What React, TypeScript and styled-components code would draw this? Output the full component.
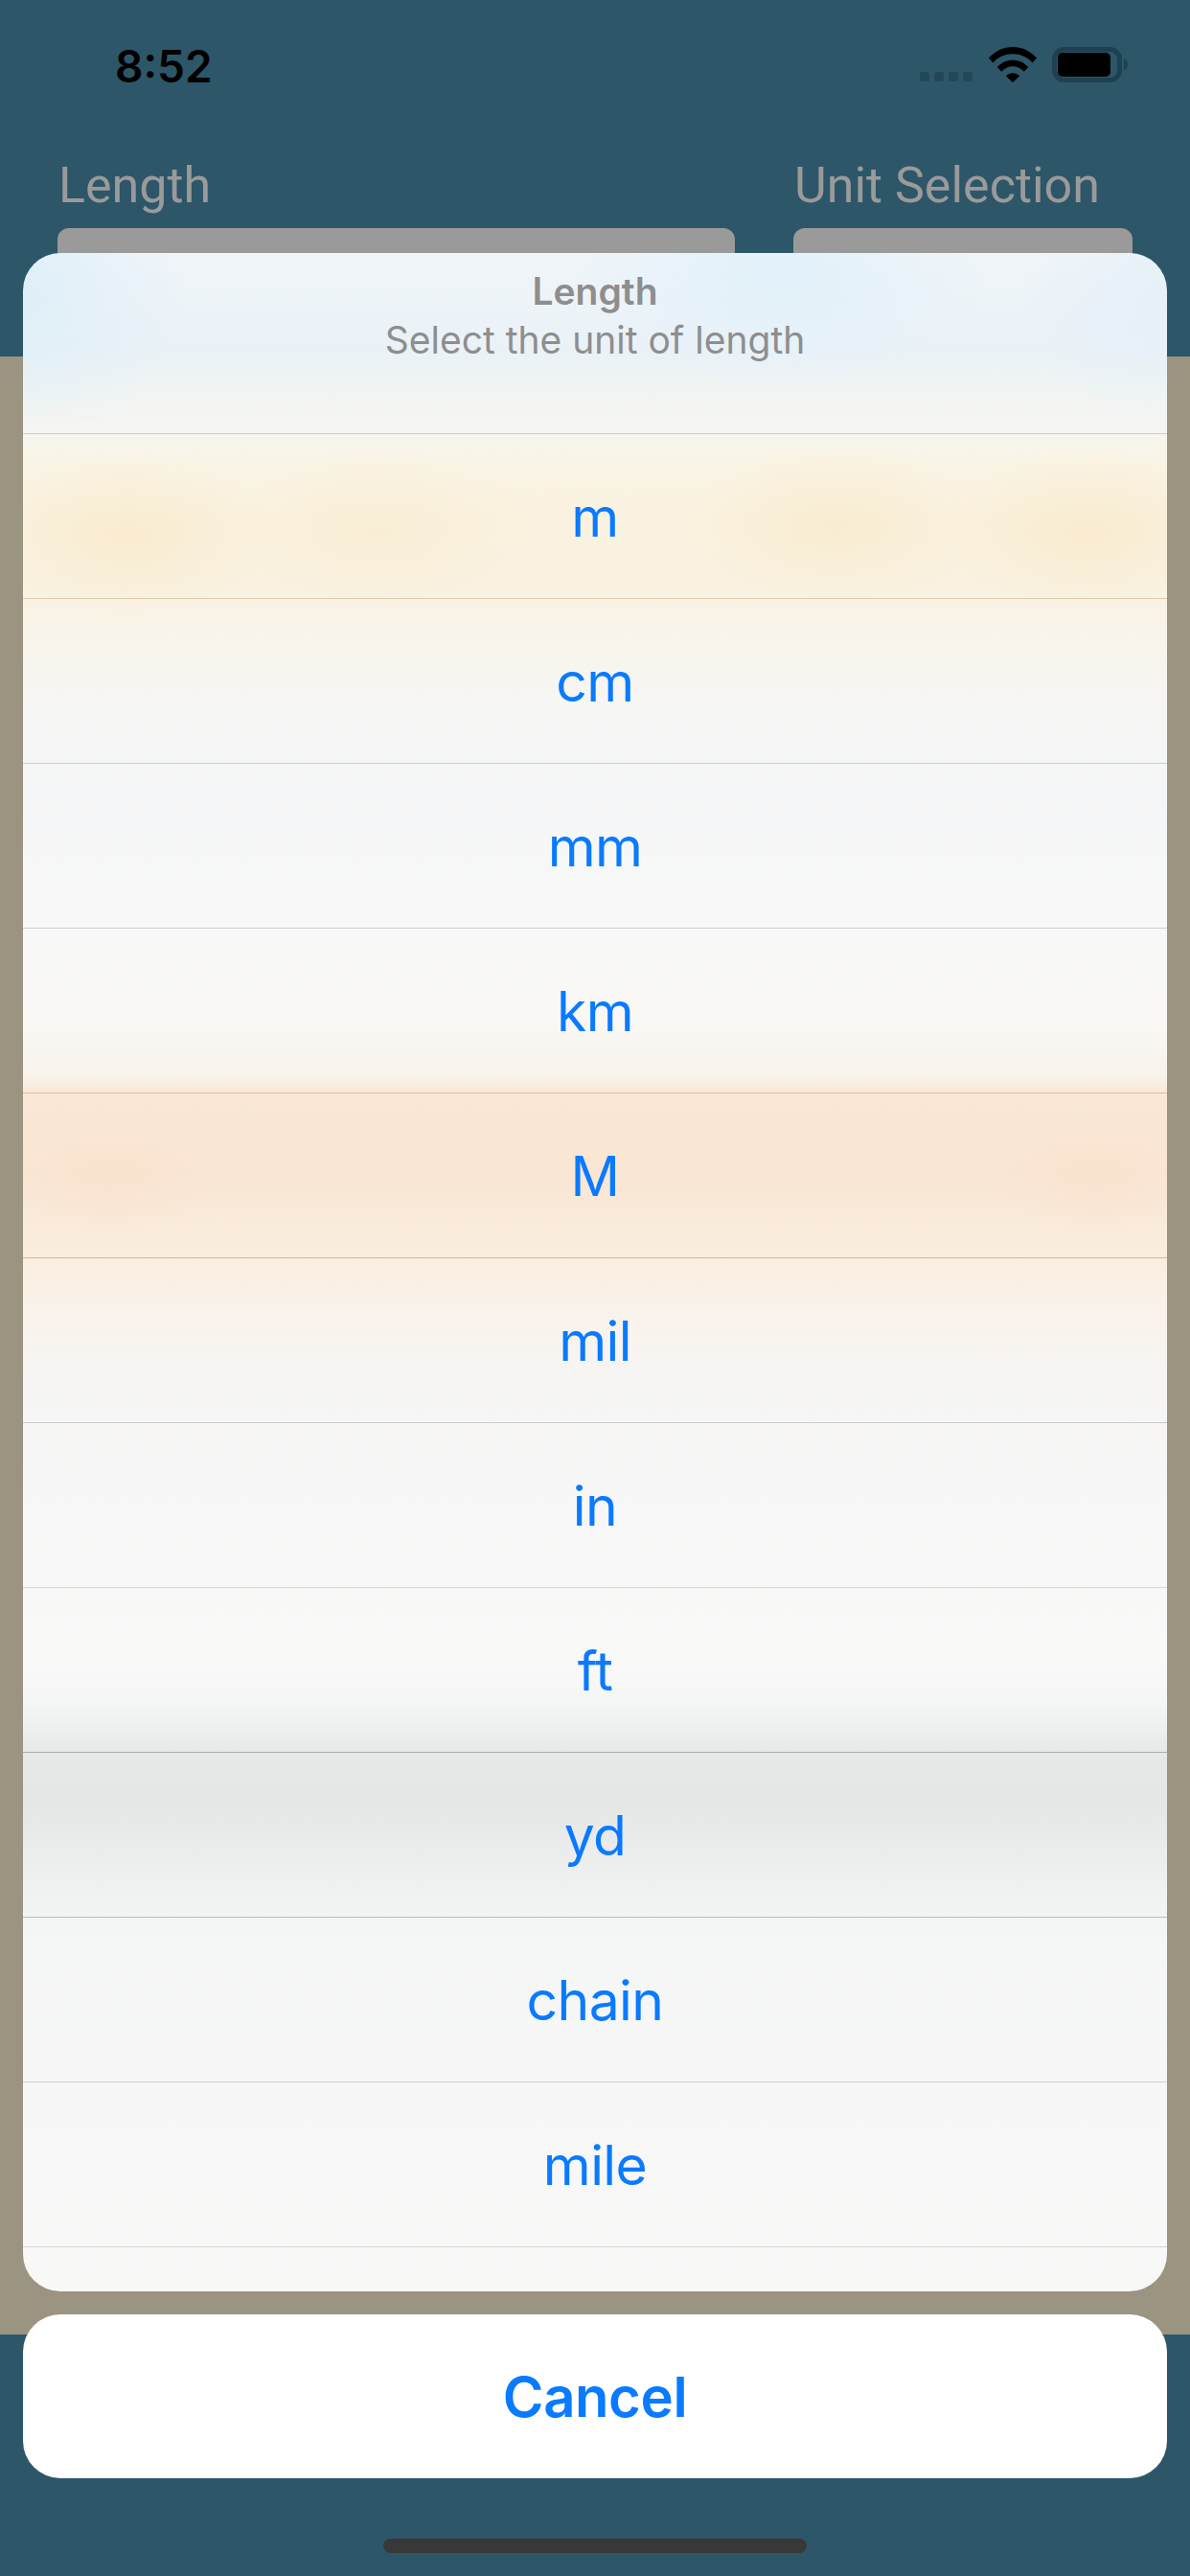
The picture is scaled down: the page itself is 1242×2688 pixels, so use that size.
import styled, { createGlobalStyle } from 'styled-components'

const GlobalStyle = createGlobalStyle`
  html, body {
    margin: 0;
    padding: 0;
  }
  body {
    font-family: Inter, "Liberation Sans", sans-serif;
    background: #2d5669;
  }
`

const Screen = styled.div`
  background: #2d5669;
  display: flex;
  flex-direction: column;
  height: 2688px;
  overflow: hidden;
  position: relative;
  width: 1242px;
`

const StatusBar = styled.div`
  align-items: flex-start;
  display: flex;
  height: 132px;
  justify-content: space-between;
  padding: 0 65px 0 120px;
`

const Time = styled.div`
  color: #000;
  font-size: 46px;
  font-weight: 600;
  line-height: 46px;
  margin-top: 46px;
`

const StatusIcons = styled.div`
  align-items: flex-start;
  display: flex;
  margin-top: 49px;

  svg + svg {
    margin-left: 16px;
  }
`

const SignalDots = styled.div`
  display: flex;
  gap: 5px;
  margin: 26px 17px 0 0;
`

const Dot = styled.span`
  background: #234757;
  border-radius: 3px;
  display: block;
  height: 10px;
  width: 10px;
`

const Fields = styled.div`
  display: flex;
  gap: 61px;
  height: 240px;
  padding: 0 60px;
`

const Field = styled.div<{ $width: number }>`
  display: flex;
  flex-direction: column;
  width: ${p => p.$width}px;
`

const FieldLabel = styled.div`
  box-sizing: border-box;
  color: #9a9a9a;
  font-family: Roboto, sans-serif;
  font-size: 52px;
  font-weight: 400;
  height: 106px;
  line-height: 60px;
  padding: 32px 0 0 1px;
  white-space: nowrap;
`

const FieldBox = styled.div`
  background: #9a9a9a;
  border-radius: 12px;
  height: 90px;
`

const Body = styled.div`
  background: #9a9480;
  height: 2064px;
`

const Overlay = styled.div`
  display: flex;
  flex-direction: column;
  gap: 24px;
  left: 24px;
  position: absolute;
  top: 264px;
  width: 1194px;
`

const Sheet = styled.div`
  background:
    radial-gradient(ellipse 160px 85px at 110px 295px, rgba(249, 231, 196, 0.6), transparent),
    radial-gradient(ellipse 160px 85px at 370px 290px, rgba(249, 231, 196, 0.4), transparent),
    radial-gradient(ellipse 160px 85px at 850px 285px, rgba(249, 231, 196, 0.55), transparent),
    radial-gradient(ellipse 160px 85px at 1110px 290px, rgba(249, 231, 196, 0.6), transparent),
    radial-gradient(ellipse 110px 60px at 90px 965px, rgba(250, 224, 204, 0.6), transparent),
    radial-gradient(ellipse 110px 60px at 1120px 965px, rgba(250, 224, 204, 0.6), transparent),
    radial-gradient(ellipse 170px 150px at 0px 40px, rgba(219, 238, 248, 0.8), transparent),
    radial-gradient(ellipse 220px 120px at 790px 20px, rgba(222, 240, 250, 0.8), transparent),
    radial-gradient(ellipse 150px 130px at 1190px 40px, rgba(224, 238, 248, 0.6), transparent),
    linear-gradient(
      180deg,
      #f0f5f9 0,
      #eaf2f7 100px,
      #f1f4f3 150px,
      #f6f5f1 185px,
      #f9f4e6 215px,
      #faf2e0 275px,
      #f9f2e2 350px,
      #f9f4e9 390px,
      #f6f6f4 470px,
      #f5f6f7 560px,
      #f8f8f8 700px,
      #f9f8f5 800px,
      #f8f4ed 855px,
      #f9e8d5 880px,
      #f9e6d3 960px,
      #faeee0 1050px,
      #f9f2ea 1100px,
      #f6f5f3 1170px,
      #f7f7f7 1300px,
      #f9f9f8 1470px,
      #f5f6f6 1510px,
      #e6e8e8 1570px,
      #e5e7e7 1620px,
      #eff0f0 1700px,
      #f5f6f6 1760px,
      #f8f8f7 2127px
    );
  border-radius: 39px;
  display: flex;
  flex-direction: column;
  height: 2127px;
  overflow: hidden;
`

const SheetHeader = styled.div`
  box-sizing: border-box;
  flex: none;
  height: 188px;
  padding-top: 17px;
  text-align: center;
`

const SheetTitle = styled.div`
  color: #8e8e8e;
  font-size: 39px;
  font-weight: 600;
  line-height: 46px;
`

const SheetMessage = styled.div`
  color: #8e8e8e;
  font-size: 39px;
  font-weight: 400;
  line-height: 46px;
  margin-top: 5px;
`

const Option = styled.div<{ $line: string }>`
  align-items: center;
  border-top: 1px solid ${p => p.$line};
  box-sizing: border-box;
  color: #0a7aff;
  display: flex;
  flex: none;
  font-size: 57px;
  height: 172px;
  justify-content: center;
  letter-spacing: -0.6px;
  padding-top: 2px;
`

const CancelButton = styled.div`
  align-items: center;
  background: #fff;
  border-radius: 39px;
  color: #0a7aff;
  display: flex;
  font-size: 58px;
  font-weight: 600;
  height: 171px;
  justify-content: center;
  letter-spacing: -0.4px;
`

const HomeIndicator = styled.div`
  background: #383838;
  border-radius: 8px;
  bottom: 24px;
  height: 15px;
  left: 400px;
  position: absolute;
  width: 442px;
`

function WifiIcon() {
  return (
    <svg width="50" height="37" viewBox="0 0 50 37">
      <path d="M0 11.5 C14 -3.8 36 -3.8 50 11.5 L45.6 16.4 C34 4.3 16 4.3 4.4 16.4 Z" fill="#000" />
      <path d="M8.7 21 C17.5 11.2 32.5 11.2 41.3 21 L36.8 25.7 C29.5 18.4 20.5 18.4 13.2 25.7 Z" fill="#000" />
      <path d="M17.8 30.2 C22 26.2 28 26.2 32.2 30.2 L25 37 Z" fill="#000" />
    </svg>
  )
}

function BatteryIcon() {
  return (
    <svg width="79" height="37" viewBox="0 0 79 37">
      <rect x="2.5" y="2.5" width="68" height="32" rx="10" fill="none" stroke="#1f4050" strokeWidth="5" />
      <rect x="6" y="6" width="55" height="25" rx="5" fill="#000" />
      <path d="M75 12 C78 13.5 79 16 79 18.5 C79 21 78 23.5 75 25 Z" fill="#1f4050" />
    </svg>
  )
}

const UNITS = [
  { label: 'm', line: '#d8ccb0' },
  { label: 'cm', line: '#dccaae' },
  { label: 'mm', line: '#c9ccd3' },
  { label: 'km', line: '#cfd0d0' },
  { label: 'M', line: '#e8bb90' },
  { label: 'mil', line: '#e4b488' },
  { label: 'in', line: '#c8cace' },
  { label: 'ft', line: '#d8d8d8' },
  { label: 'yd', line: '#a8adb0' },
  { label: 'chain', line: '#b8bcc0' },
  { label: 'mile', line: '#cfcfcf' },
  { label: '', line: '#d8d5d5' },
]

export default function App() {
  return (
    <Screen>
      <GlobalStyle />
      <StatusBar>
        <Time>8:52</Time>
        <StatusIcons>
          <SignalDots>
            <Dot />
            <Dot />
            <Dot />
            <Dot />
          </SignalDots>
          <WifiIcon />
          <BatteryIcon />
        </StatusIcons>
      </StatusBar>
      <Fields>
        <Field $width={707}>
          <FieldLabel>Length</FieldLabel>
          <FieldBox />
        </Field>
        <Field $width={354}>
          <FieldLabel>Unit Selection</FieldLabel>
          <FieldBox />
        </Field>
      </Fields>
      <Body />
      <Overlay>
        <Sheet>
          <SheetHeader>
            <SheetTitle>Length</SheetTitle>
            <SheetMessage>Select the unit of length</SheetMessage>
          </SheetHeader>
          {UNITS.map(unit => (
            <Option key={unit.label} $line={unit.line}>
              {unit.label}
            </Option>
          ))}
        </Sheet>
        <CancelButton>Cancel</CancelButton>
      </Overlay>
      <HomeIndicator />
    </Screen>
  )
}
